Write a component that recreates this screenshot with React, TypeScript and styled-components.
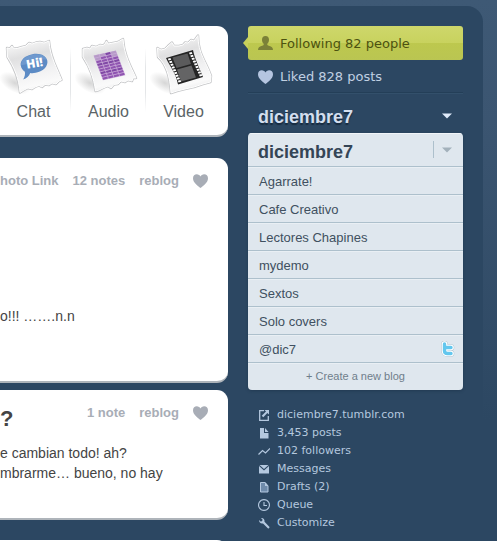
import React from 'react';
import styled, { createGlobalStyle } from 'styled-components';

const GlobalStyle = createGlobalStyle`
  *, *::before, *::after { box-sizing: border-box; }
  html { background: #2c4762; }
  body {
    margin: 0;
    overflow: hidden;
    font-family: "Liberation Sans", Arial, sans-serif;
    color: #444;
  }
  h1, h2, p, ul { margin: 0; padding: 0; }
  ul { list-style: none; }
  a { color: inherit; text-decoration: none; }
  button { border: 0; margin: 0; font: inherit; color: inherit; cursor: pointer; background: none; padding: 0; }
  svg { display: block; flex: none; }
`;

const Page = styled.div`
  min-height: 100vh;
  padding: 6px 14px 0 0;
  background: linear-gradient(#3e5975 0, #3b5571 120px, #2c4762 420px);
`;

const Panel = styled.div`
  display: flex;
  gap: 20px;
  height: calc(100vh - 6px);
  padding: 20px 20px 0 0;
  overflow: hidden;
  border-top-right-radius: 16px;
  background: #2c4762;
`;

const Feed = styled.main`
  flex: 1;
  min-width: 0;
`;

const Card = styled.section<{ $height: number; $after: number }>`
  min-height: ${(p) => p.$height}px;
  margin-bottom: ${(p) => p.$after}px;
  overflow: hidden;
  border-bottom: 2px solid #aeb4ba;
  border-radius: 0 11px 11px 0;
  background: #fff;
`;

const PostTypes = styled.nav`
  display: flex;
  justify-content: flex-end;
  padding: 4px 7px 0 0;
`;

const PostType = styled.a`
  display: flex;
  flex: none;
  flex-direction: column;
  align-items: center;
  width: 75px;
  font-size: 16px;
  line-height: 22px;
  color: #5b6467;
  background: linear-gradient(transparent, #e4e6e8 30%, #e4e6e8 70%, transparent) right 18px / 1px 64px no-repeat;

  &:last-child { background: none; }
`;

const PostHead = styled.header`
  display: flex;
  align-items: center;
  justify-content: flex-end;
  gap: 14px;
  padding: 15px 20px 0 0;
  font-size: 13px;
  line-height: 16px;
  font-weight: bold;
  color: #a8adb6;
  white-space: nowrap;
`;

const PostTitle = styled.h2`
  height: 16px;
  padding-top: 2px;
  margin-right: auto;
  font-size: 22px;
  line-height: 24px;
  color: #444;
`;

const PostText = styled.p<{ $top: number }>`
  padding-top: ${(p) => p.$top}px;
  font-size: 14px;
  line-height: 20px;
  color: #444;
  white-space: nowrap;
`;

const Sidebar = styled.aside`
  flex: none;
  width: 215px;
`;

const Following = styled.a`
  position: relative;
  display: flex;
  align-items: center;
  gap: 7px;
  height: 34px;
  padding: 2px 0 0 10px;
  border-radius: 3px;
  font: 13px/18px "DejaVu Sans", Verdana, sans-serif;
  color: #4c5210;
  background: linear-gradient(#ced76b, #c8d25e 50%, #bdc84e 50%, #bac552);

  &::before {
    content: "";
    position: absolute;
    left: -5px;
    top: 11px;
    border: solid transparent;
    border-width: 6px 5px 6px 0;
    border-right-color: #c6d05b;
  }
`;

const Liked = styled.a`
  display: flex;
  align-items: center;
  gap: 7px;
  height: 33px;
  padding: 2px 0 0 10px;
  border-bottom: 1px solid #243f58;
  box-shadow: 0 1px #33506b;
  font: 13px/18px "DejaVu Sans", Verdana, sans-serif;
  color: #c0d0e2;
`;

const BlogTitle = styled.button`
  display: flex;
  align-items: center;
  justify-content: space-between;
  width: 100%;
  height: 40px;
  padding: 8px 11px 0 10px;
  font-size: 18px;
  font-weight: bold;
  line-height: 24px;
  color: #d3deee;
  text-shadow: 0 2px 1px #172b40;

  & > svg { margin-bottom: 3px; }
`;

const Menu = styled.div`
  overflow: hidden;
  border-radius: 4px;
  background: #dfe7ee;
  box-shadow: 0 1px 3px rgba(20, 40, 60, 0.4);
`;

const MenuHead = styled.button`
  display: flex;
  align-items: center;
  justify-content: space-between;
  width: 100%;
  height: 34px;
  padding: 4px 11px 0 10px;
  border-bottom: 1px solid #adc0cc;
  font-size: 18px;
  font-weight: bold;
  line-height: 24px;
  color: #344556;
  box-shadow: inset 0 1px #f1f5f8;
`;

const CaretBox = styled.span`
  display: flex;
  align-items: center;
  height: 17px;
  padding-left: 8px;
  margin-bottom: 4px;
  border-left: 1px solid #adc0cc;
`;

const MenuItem = styled.a`
  display: flex;
  align-items: center;
  justify-content: space-between;
  height: 28px;
  padding: 3px 7px 0 11px;
  border-bottom: 1px solid #adc0cc;
  font-size: 13px;
  line-height: 18px;
  color: #405060;
  box-shadow: inset 0 1px #e9eff4;

  & > svg { margin-bottom: 2px; }
`;

const CreateBlog = styled.button`
  width: 100%;
  height: 27px;
  padding-bottom: 1px;
  font-size: 11px;
  line-height: 16px;
  color: #6f7e8b;
  box-shadow: inset 0 1px #e9eff4;
`;

const Stats = styled.ul`
  padding: 16px 0 0 10px;
`;

const Stat = styled.a`
  display: flex;
  align-items: center;
  gap: 7px;
  height: 18px;
  font: 11px/18px "DejaVu Sans", Verdana, sans-serif;
  color: #b4c8df;
`;

const Artwork = styled.span`
  display: block;
`;

const Heart = ({ color }: { color: string }) => (
  <svg width="15" height="14" viewBox="0 0 15 14" fill={color} aria-hidden="true">
    <path d="M7.5 14C5 11.9 0 8.8 0 4.2 0 1.8 1.7.3 3.8.3 5.5.3 6.8 1.2 7.5 2.6 8.2 1.2 9.5.3 11.2.3 13.3.3 15 1.8 15 4.2 15 8.8 10 11.9 7.5 14Z" />
  </svg>
);

const Person = () => (
  <svg width="15" height="16" viewBox="0 0 15 16" fill="#7b8138" aria-hidden="true">
    <path d="M7.5 0C9.8 0 11 1.5 11 3.7 11 5.5 10.3 7 9.300 7.800V9C11 10 13.800 10.600 14.600 12L15 14H0L.4 12C1.200 10.600 4 10 5.700 9V7.800C4.700 7 4 5.500 4 3.700 4 1.500 5.200 0 7.500 0Z" />
  </svg>
);

const Caret = ({ color }: { color: string }) => (
  <svg width="10" height="6" viewBox="0 0 10 6" fill={color} aria-hidden="true">
    <path d="M0 .5H10L5 5.5Z" />
  </svg>
);

const Twitter = () => (
  <svg width="16" height="16" viewBox="0 0 16 16" fill="none" strokeLinecap="round" strokeLinejoin="round" aria-hidden="true">
    <path d="M4.500 3V9.500Q4.500 12.500 7.500 12.500H11M4.500 6.500H11" stroke="#b3c6d3" strokeWidth="6.600" />
    <path d="M4.500 3V9.500Q4.500 12.500 7.500 12.500H11M4.500 6.500H11" stroke="#fff" strokeWidth="5.600" />
    <path d="M4.500 3V9.500Q4.500 12.500 7.500 12.500H11M4.500 6.500H11" stroke="#63c7ee" strokeWidth="3.400" />
  </svg>
);

const Paper = ({ d, id, children }: { d: string; id: string; children: React.ReactNode }) => (
  <Artwork>
    <svg width="75" height="71" viewBox="0 0 75 71" aria-hidden="true">
      <defs>
        <linearGradient id={`${id}-sheet`} x1="0.35" y1="0" x2="0.6" y2="1">
          <stop offset="0" stopColor="#f7f7f7" />
          <stop offset="0.28" stopColor="#e0e0e1" />
          <stop offset="0.6" stopColor="#f1f1f2" />
          <stop offset="0.85" stopColor="#fafafa" />
          <stop offset="1" stopColor="#e8e8e9" />
        </linearGradient>
        <radialGradient id={`${id}-shade`}>
          <stop offset="0" stopColor="#777" stopOpacity="0.3" />
          <stop offset="1" stopColor="#777" stopOpacity="0" />
        </radialGradient>
      </defs>
      <ellipse cx="19" cy="53" rx="17" ry="9" transform="rotate(28 19 53)" fill={`url(#${id}-shade)`} />
      <path d={d} fill="#fff" stroke="#c6c7c9" strokeWidth="2.400" strokeLinejoin="round" />
      <path d={d} fill={`url(#${id}-sheet)`} stroke="#fff" strokeWidth="1" strokeLinejoin="round" />
      {children}
    </svg>
  </Artwork>
);

const ChatArt = () => (
  <Paper id="chat" d="M11 18 14 18.5 16 16 17 18 21 18.5 26 17 30 16 33 13 36 14 40 12.5 44 12 48 13 53 11C54 27 61 38 65.500 50L63 51 60 54 56 53 53 55 49 54.500 46 57 43 55.500 39 57 36 59 32 58 28 60 24 62.500C23 48 18 37 11.500 27Z">
    <g transform="rotate(-10 38 33)">
      <path d="M38 24C46 24 51.500 28 51.500 33.200S46 43 38 43C36 43 34 42.800 32.500 42.200 31 45 28 47 24.500 47.300 26.500 45 27.500 42.500 27.500 40 25.500 38.300 24.500 36 24.500 33.200 24.500 28 30 24 38 24Z" fill="#5c8bc5" />
      <path d="M25 33C25 28 31 24.500 38 24.500S51 28 51 32C42 29 34 34 25 33Z" fill="#7ba3d4" opacity=".6" />
      <text x="38.500" y="37.500" textAnchor="middle" fontFamily="Open Sans, sans-serif" fontWeight="800" fontSize="12" fill="#fff">Hi!</text>
    </g>
  </Paper>
);

const bars = Array.from({ length: 36 }, (_, i) => ({ col: i % 4, row: Math.floor(i / 4) }));

const barColor = (col: number, row: number) => {
  if (row < 2 && col !== 2 && !(col === 1 && row === 1)) return '#b69ac7';
  return row % 3 === 0 ? '#8049a5' : '#9055b1';
};

const AudioArt = () => (
  <Paper id="audio" d="M12 19 16 18 19 19 21 16 25 17 29 15 32 15.500 34 14 35.500 11 37 14 42 13 47 12 52 9C53 25 60 37 65 48L62 48 61 51 57 50 54 52 50 51 47 54 43 54.500 40 58 37 56 32 58 28 60 24.500 61C23 48 18 36 12 27Z">
    <g transform="matrix(5.600 -1.250 1.050 2.750 22.500 25.500)">
      <path d="M0 0H4V9H0Z" fill="#c8a9d8" />
      {bars.map(({ col, row }) => (
        <rect key={`${col}-${row}`} x={col + 0.07} y={row + 0.1} width=".86" height=".72" fill={barColor(col, row)} />
      ))}
    </g>
  </Paper>
);

const holes = Array.from({ length: 9 }, (_, i) => i);

const VideoArt = () => (
  <Paper id="video" d="M11.500 18 15 20 19 19 22 16 26 12.500 28 16 33 16 37 15 39 12.500 42 13 45 10 48 11 52 5.500C52 24 60 31 65 46L64.500 52 57 54 48 57 39 59 31 61 25 63C24 46 20 34 12 27Z">
    <path d="M20 28 47 20C49 30 54 39 57 47L32 54.500C30 43 24 37 20 28Z" fill="#252525" />
    <path d="M26.500 27.500 41.500 23.500 45 34 30.500 38Z" fill="#5b5b5c" />
    <path d="M31 39.500 45.500 35.500 50 47.500 35 51.500Z" fill="#646465" />
    {holes.map((i) => (
      <g key={i} transform={`translate(${i * 1.25} ${i * 2.75})`}>
        <path d="M21.800 28.700 24.400 28 25.200 29.800 22.600 30.500Z" fill="#fff" />
        <path d="M43 22.700 45.600 22 46.400 23.800 43.800 24.500Z" fill="#fff" />
      </g>
    ))}
  </Paper>
);

const statIcons: Record<string, React.ReactNode> = {
  open: (
    <>
      <path d="M6 1.700H1.700V11.300H10.300V7" fill="none" stroke="currentColor" strokeWidth="1.300" />
      <path d="M6.500 1H11V5.500L9.300 3.900 5.300 8.300 3.700 6.700 8 2.600Z" />
    </>
  ),
  posts: <path d="M2 1H6V6H10.500V11.500H2ZM7 1 10.500 5H7Z" />,
  followers: <path d="M.5 9.500 4.500 5.500 7.500 8 12 3.500" fill="none" stroke="currentColor" strokeWidth="1.200" />,
  messages: <path d="M1 3 6 7.500 11 3V10.500H1ZM1.500 2H10.500L6 6Z" />,
  drafts: (
    <>
      <path d="M2.500 1.500H7L10 5V11H2.500Z" fill="#6f8bab" stroke="currentColor" />
      <path d="M7 1V5H10.500Z" />
    </>
  ),
  queue: <path d="M6 .6A5.400 5.400 0 1 1 5.990 .6ZM6 3V6.500H9" fill="none" stroke="currentColor" strokeWidth="1.100" />,
  customize: <path d="M3 1.100C5 .7 7 2.300 6.500 4.800L11.300 9.700C12 10.600 10.800 11.900 9.800 11.200L5 6.400C2.800 7 .9 5.300 1.100 3L3 4.800 4.800 3Z" />,
};

const stats = [
  ['open', 'diciembre7.tumblr.com'],
  ['posts', '3,453 posts'],
  ['followers', '102 followers'],
  ['messages', 'Messages'],
  ['drafts', 'Drafts (2)'],
  ['queue', 'Queue'],
  ['customize', 'Customize'],
];

const blogs = ['Agarrate!', 'Cafe Creativo', 'Lectores Chapines', 'mydemo', 'Sextos', 'Solo covers', '@dic7'];

export default function App() {
  return (
    <>
      <GlobalStyle />
      <Page>
        <Panel>
          <Feed>
            <Card $height={111} $after={21}>
              <PostTypes aria-label="New post">
                <PostType href="#chat"><ChatArt />Chat</PostType>
                <PostType href="#audio"><AudioArt />Audio</PostType>
                <PostType href="#video"><VideoArt />Video</PostType>
              </PostTypes>
            </Card>
            <Card $height={225} $after={7}>
              <PostHead>
                <a href="#link">hoto Link</a>
                <a href="#notes">12 notes</a>
                <a href="#reblog">reblog</a>
                <button aria-label="Like"><Heart color="#a8adb6" /></button>
              </PostHead>
              <PostText $top={117}>o!!! …….n.n</PostText>
            </Card>
            <Card $height={130} $after={20}>
              <PostHead>
                <PostTitle>?</PostTitle>
                <a href="#note">1 note</a>
                <a href="#reblog">reblog</a>
                <button aria-label="Like"><Heart color="#a8adb6" /></button>
              </PostHead>
              <PostText $top={22}>
                e cambian todo! ah?
                <br />
                mbrarme… bueno, no hay
              </PostText>
            </Card>
            <Card $height={60} $after={0} />
          </Feed>
          <Sidebar>
            <Following href="#following"><Person />Following 82 people</Following>
            <Liked href="#liked"><Heart color="#b5c5e0" />Liked 828 posts</Liked>
            <BlogTitle>diciembre7<Caret color="#e0ebfa" /></BlogTitle>
            <Menu>
              <MenuHead>
                diciembre7
                <CaretBox><Caret color="#a3b1bb" /></CaretBox>
              </MenuHead>
              <ul>
                {blogs.map((name) => (
                  <li key={name}>
                    <MenuItem href="#blog">
                      {name}
                      {name === '@dic7' && <Twitter />}
                    </MenuItem>
                  </li>
                ))}
              </ul>
              <CreateBlog>+ Create a new blog</CreateBlog>
            </Menu>
            <Stats>
              {stats.map(([icon, label]) => (
                <li key={label}>
                  <Stat href={`#${icon}`}>
                    <svg width="12" height="12" viewBox="0 0 12 12" fill="currentColor" aria-hidden="true">{statIcons[icon]}</svg>
                    {label}
                  </Stat>
                </li>
              ))}
            </Stats>
          </Sidebar>
        </Panel>
      </Page>
    </>
  );
}
